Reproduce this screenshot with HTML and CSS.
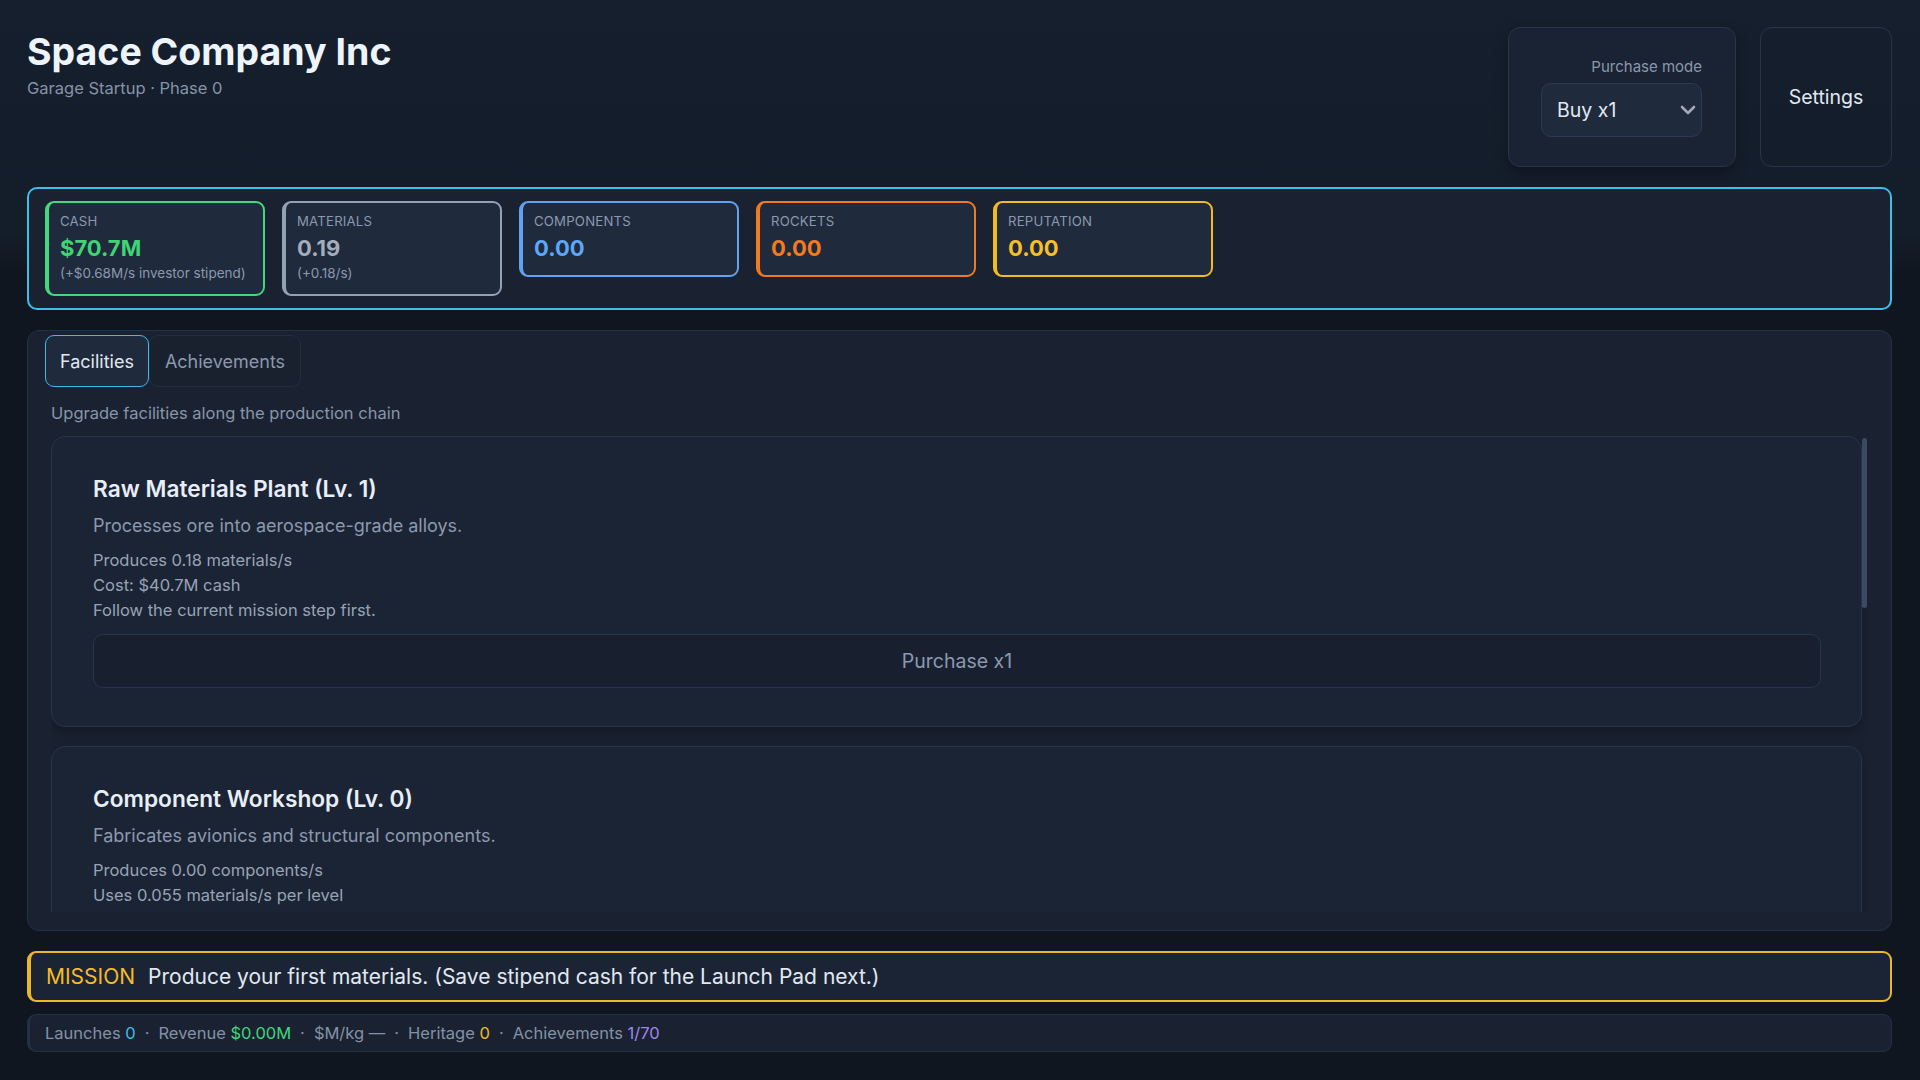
FILE: index.html
```html
<!DOCTYPE html>
<html lang="en">
<head>
  <meta charset="UTF-8">
  <meta name="viewport" content="width=device-width, initial-scale=1.0">
  <title>Space Company Inc</title>
  <link rel="stylesheet" href="styles.css">
</head>
<body>

  <div class="app">
    <header class="top">
      <div class="brand">
        <h1>Space Company Inc</h1>
        <p class="phase">Garage Startup · Phase 0</p>
      </div>
      <div class="controls">
        <div class="mode-card">
          <label for="buyMode">Purchase mode</label>
          <div class="select-wrap">
            <select id="buyMode">
              <option>Buy x1</option>
              <option>Buy x10</option>
              <option>Buy max</option>
            </select>
            <svg class="chevron" viewBox="0 0 16 10" width="16" height="10">
              <path d="M2 2l6 6 6-6" fill="none" stroke="currentColor" stroke-width="2.6" stroke-linecap="round" stroke-linejoin="round"/>
            </svg>
          </div>
        </div>
        <button class="settings" type="button">Settings</button>
      </div>
    </header>

    <section class="resources">
      <div class="res res-cash">
        <div class="res-label">Cash</div>
        <div class="res-value">$70.7M</div>
        <div class="res-sub">(+$0.68M/s investor stipend)</div>
      </div>
      <div class="res res-materials">
        <div class="res-label">Materials</div>
        <div class="res-value">0.19</div>
        <div class="res-sub">(+0.18/s)</div>
      </div>
      <div class="res res-components">
        <div class="res-label">Components</div>
        <div class="res-value">0.00</div>
      </div>
      <div class="res res-rockets">
        <div class="res-label">Rockets</div>
        <div class="res-value">0.00</div>
      </div>
      <div class="res res-reputation">
        <div class="res-label">Reputation</div>
        <div class="res-value">0.00</div>
      </div>
    </section>

    <section class="panel">
      <div class="tabs">
        <button class="tab active" type="button">Facilities</button>
        <button class="tab" type="button">Achievements</button>
      </div>

      <div class="tab-body">
        <p class="hint">Upgrade facilities along the production chain</p>

        <div class="list-wrap">
          <div class="facility-list">
            <div class="facility">
              <h3>Raw Materials Plant (Lv. 1)</h3>
              <p class="desc">Processes ore into aerospace-grade alloys.</p>
              <div class="facility-stats">
                <div>Produces 0.18 materials/s</div>
                <div>Cost: $40.7M cash</div>
                <div>Follow the current mission step first.</div>
              </div>
              <button class="buy" type="button">Purchase x1</button>
            </div>

            <div class="facility">
              <h3>Component Workshop (Lv. 0)</h3>
              <p class="desc">Fabricates avionics and structural components.</p>
              <div class="facility-stats">
                <div>Produces 0.00 components/s</div>
                <div>Uses 0.055 materials/s per level</div>
                <div>Cost: $12.0M cash</div>
                <div>Follow the current mission step first.</div>
              </div>
              <button class="buy" type="button">Purchase x1</button>
            </div>

            <div class="facility">
              <h3>Rocket Assembly (Lv. 0)</h3>
              <p class="desc">Integrates components into flight-ready vehicles.</p>
              <div class="facility-stats">
                <div>Produces 0.00 rockets/s</div>
                <div>Uses 0.020 components/s per level</div>
                <div>Cost: $55.0M cash</div>
              </div>
              <button class="buy" type="button">Purchase x1</button>
            </div>
          </div>
          <!-- scroll position indicator for the facility list -->
          <div class="scroll-thumb"></div>
        </div>
      </div>
    </section>

    <div class="mission">
      <span class="mission-tag">MISSION</span>
      <span>Produce your first materials. (Save stipend cash for the Launch Pad next.)</span>
    </div>

    <div class="stats-line">
      <span>Launches <span class="c-cyan">0</span></span>
      <span class="sep">·</span>
      <span>Revenue <span class="c-green">$0.00M</span></span>
      <span class="sep">·</span>
      <span>$M/kg —</span>
      <span class="sep">·</span>
      <span>Heritage <span class="c-amber">0</span></span>
      <span class="sep">·</span>
      <span>Achievements <span class="c-purple">1/70</span></span>
    </div>
  </div>

</body>
</html>
```

FILE: styles.css
```css
* {
  box-sizing: border-box;
}

html,
body {
  margin: 0;
  height: 100%;
}

body {
  font-family: Inter, "Noto Sans", sans-serif;
  color: #e2e8f0;
  background: linear-gradient(180deg, #151f2d 0, #141d2a 235px, #10161f 275px) no-repeat, #10161f;
}

.app {
  height: 100vh;
  display: flex;
  flex-direction: column;
  gap: 20px;
  padding: 27px 28px 28px 27px;
}

/* header */

.top {
  flex: none;
  height: 140px;
  display: flex;
  justify-content: space-between;
  align-items: flex-start;
}

h1 {
  margin: 0;
  font-size: 37.5px;
  line-height: 50px;
  font-weight: 700;
  color: #eef4fb;
}

.phase {
  margin: 1px 0 0;
  font-size: 16.5px;
  color: #8593a8;
}

.controls {
  display: flex;
  gap: 24px;
  height: 140px;
}

.mode-card {
  width: 228px;
  padding: 0 33px;
  display: flex;
  flex-direction: column;
  align-items: flex-end;
  justify-content: center;
  gap: 6px;
  background: #1a2333;
  border: 1px solid #27344a;
  border-radius: 12px;
  box-shadow: 0 6px 14px rgba(0, 0, 0, 0.3);
}

.mode-card label {
  font-size: 15px;
  line-height: 20px;
  color: #8a98ad;
}

.select-wrap {
  position: relative;
  width: 161px;
}

.select-wrap select {
  appearance: none;
  width: 100%;
  height: 54px;
  padding: 0 15px;
  font-family: inherit;
  font-size: 19.5px;
  color: #e2e8f0;
  background: #1f2a3d;
  border: 1px solid #2c3a51;
  border-radius: 10px;
}

.chevron {
  position: absolute;
  right: 6px;
  top: 22px;
  color: #a3a9b3;
  pointer-events: none;
}

.settings {
  width: 132px;
  background: transparent;
  border: 1px solid #27344a;
  border-radius: 12px;
  color: #e2e8f0;
  font-family: inherit;
  font-size: 19.5px;
}

/* resource strip */

.resources {
  flex: none;
  display: flex;
  align-items: flex-start;
  gap: 17px;
  padding: 12px 16px;
  background: #1a2232;
  border: 2px solid #3cc0ea;
  border-radius: 10px;
}

.res {
  width: 220px;
  padding: 9px 11px 12px;
  background: #1f2a3d;
  border: 2px solid;
  border-left-width: 4px;
  border-radius: 9px;
}

.res-label {
  font-size: 13.2px;
  line-height: 18px;
  letter-spacing: 0.2px;
  text-transform: uppercase;
  color: #8b99ae;
}

.res-value {
  margin-top: 3px;
  font-size: 22px;
  line-height: 30px;
  font-weight: 700;
}

.res-sub {
  margin-top: 2px;
  font-size: 13.5px;
  line-height: 17px;
  color: #8b99ae;
}

.res-cash { border-color: #46d67b; }
.res-cash .res-value { color: #40d475; }
.res-materials { border-color: #94a1b4; }
.res-materials .res-value { color: #a3adbb; }
.res-components { border-color: #5ea2f2; }
.res-components .res-value { color: #5ea6f6; }
.res-rockets { border-color: #f07a1f; }
.res-rockets .res-value { color: #f47b1c; }
.res-reputation { border-color: #f2bb22; }
.res-reputation .res-value { color: #f6c026; }

/* main panel */

.panel {
  flex: 1;
  min-height: 0;
  display: flex;
  flex-direction: column;
  padding: 4px 17px 18px;
  background: #1a2231;
  border: 1px solid #243046;
  border-radius: 12px;
}

.tabs {
  display: flex;
  flex: none;
}

.tab {
  height: 52px;
  padding: 0 15px;
  font-family: inherit;
  font-size: 18px;
  color: #8b99ae;
  background: #19212f;
  border: 1px solid #222d3e;
  border-radius: 9px;
}

.tab.active {
  padding: 0 14px;
  color: #e2e8f0;
  background: #1f2a3d;
  border: 1.5px solid #3cbbe4;
}

.tab-body {
  flex: 1;
  min-height: 0;
  display: flex;
  flex-direction: column;
  padding: 0 6px;
}

.hint {
  flex: none;
  margin: 16px 0 13px;
  font-size: 16.5px;
  line-height: 20px;
  color: #8795aa;
}

.list-wrap {
  position: relative;
  flex: 1;
  min-height: 0;
}

.facility-list {
  height: 100%;
  overflow: hidden;
  display: flex;
  flex-direction: column;
  gap: 19px;
  padding-right: 6px;
}

.scroll-thumb {
  position: absolute;
  top: 2px;
  right: 1px;
  width: 5px;
  height: 170px;
  background: #3b4a62;
  border-radius: 3px;
}

.facility {
  flex: none;
  padding: 38px 40px 38px 41px;
  background: #1b2434;
  border: 1px solid #27354b;
  border-radius: 14px;
  box-shadow: 0 6px 12px rgba(0, 0, 0, 0.25);
}

.facility h3 {
  margin: 0;
  font-size: 22.7px;
  line-height: 28px;
  font-weight: 600;
  color: #e8eef6;
}

.desc {
  margin: 11px 0 0;
  font-size: 18px;
  line-height: 24px;
  color: #8b99ae;
}

.facility-stats {
  margin-top: 10px;
  font-size: 16.5px;
  line-height: 25px;
  color: #97a3b5;
}

.buy {
  display: block;
  margin-top: 11px;
  width: 100%;
  height: 54px;
  background: #182030;
  border: 1px solid #27344a;
  border-radius: 10px;
  color: #8b99ae;
  font-family: inherit;
  font-size: 19.5px;
}

/* mission + summary */

.mission {
  flex: none;
  height: 51px;
  display: flex;
  align-items: center;
  gap: 13px;
  padding: 0 15px;
  background: #1b2434;
  border: 2px solid #eab72a;
  border-left-width: 4px;
  border-radius: 9px;
  font-size: 21px;
  color: #e2e8f0;
}

.mission-tag {
  color: #f6bb26;
}

.stats-line {
  flex: none;
  height: 38px;
  margin-top: -8px;
  display: flex;
  align-items: center;
  padding: 0 15px;
  background: #1a2231;
  border: 1px solid #243047;
  border-left-width: 3px;
  border-radius: 9px;
  font-size: 16.5px;
  color: #8391a6;
  white-space: nowrap;
}

.sep {
  margin: 0 9px;
}

.c-cyan { color: #3dbde8; }
.c-green { color: #3fd47a; }
.c-amber { color: #f4bb25; }
.c-purple { color: #a184f0; }
```
